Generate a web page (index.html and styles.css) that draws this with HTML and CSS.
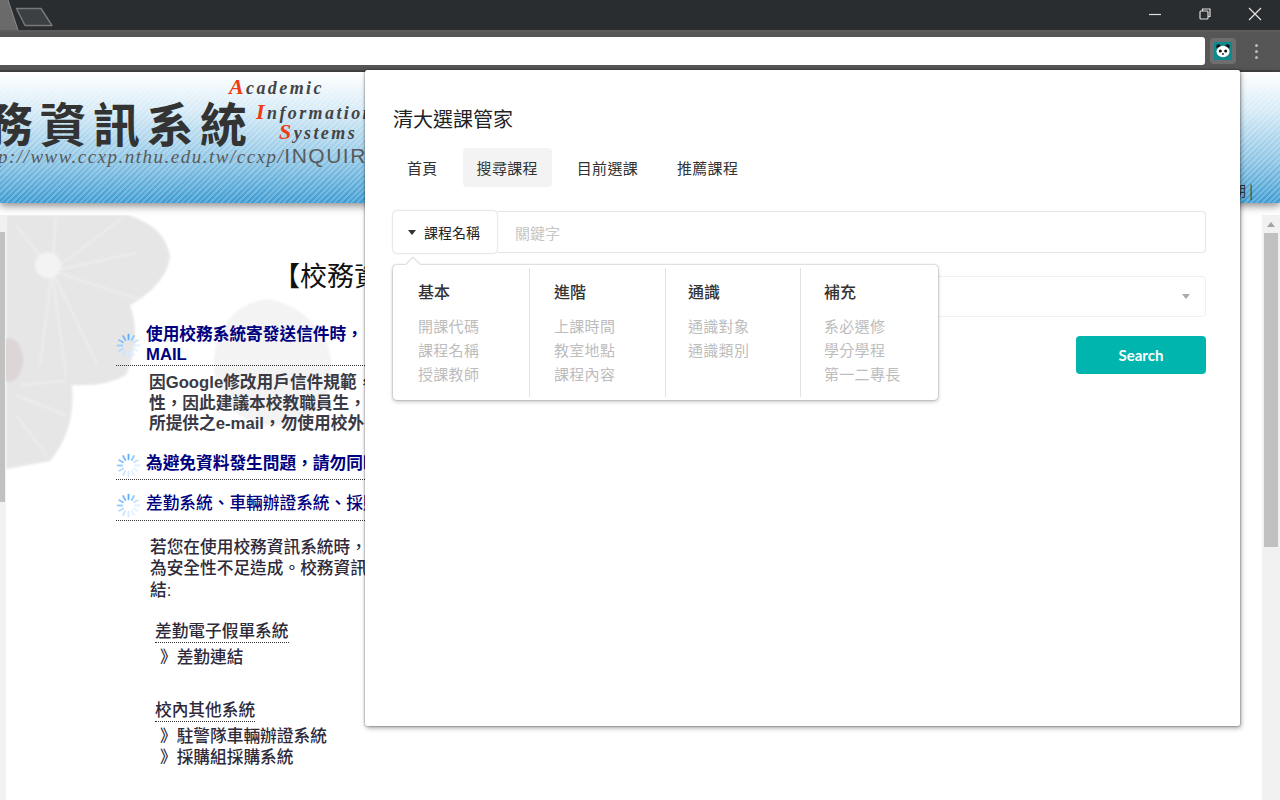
FILE: index.html
```html
<!DOCTYPE html>
<html lang="zh-Hant">
<head>
  <meta charset="UTF-8">
  <title>清大選課管家</title>
  <link rel="stylesheet" href="styles.css">
</head>
<body>
  <svg class="defs" width="0" height="0">
    <symbol id="spin" viewBox="0 0 24 24">
      <g stroke-width="1.7" stroke-linecap="round" fill="none">
        <path d="M12 1.5V6" stroke="#5aaeff"/>
        <path d="M17.2 2.9L15 6.8" stroke="#8cc6ff"/>
        <path d="M21.1 6.8L17.2 9" stroke="#c8e3ff"/>
        <path d="M22.5 12H18" stroke="#e2f0ff"/>
        <path d="M21.1 17.2L17.2 15" stroke="#e8f3ff"/>
        <path d="M17.2 21.1L15 17.2" stroke="#e2f0ff"/>
        <path d="M12 22.5V18" stroke="#d5e9ff"/>
        <path d="M6.8 21.1L9 17.2" stroke="#c8e3ff"/>
        <path d="M2.9 17.2L6.8 15" stroke="#b5d9ff"/>
        <path d="M1.5 12H6" stroke="#9ccfff"/>
        <path d="M2.9 6.8L6.8 9" stroke="#84c2ff"/>
        <path d="M6.8 2.9L9 6.8" stroke="#6db7ff"/>
      </g>
    </symbol>
    <filter id="soft"><feGaussianBlur stdDeviation="0.8"/></filter>
  </svg>

  <header class="tabbar">
    <svg class="tabs-art" width="60" height="31" viewBox="0 0 60 31">
      <path d="M0 0H8L18 30H0Z" fill="#6a6a6a"/>
      <path d="M8 0L18 30" stroke="#8a8a8a" fill="none"/>
      <path d="M16.500 8.500H41L52 25.500H25Z" fill="#3d4043" stroke="#77797b" stroke-width="1.400" stroke-linejoin="round"/>
    </svg>
    <div class="win-controls">
      <svg width="14" height="14" viewBox="0 0 14 14"><path d="M1 7.500H13" stroke="#ddd" stroke-width="1.200"/></svg>
      <svg width="14" height="14" viewBox="0 0 14 14" fill="none" stroke="#ddd" stroke-width="1.200"><rect x="2" y="4" width="8" height="8" rx="1"/><path d="M4.500 4V2H12V9.500H10"/></svg>
      <svg width="14" height="14" viewBox="0 0 14 14"><path d="M1 1L13 13M13 1L1 13" stroke="#e4e4e4" stroke-width="1.200"/></svg>
    </div>
  </header>

  <div class="toolbar">
    <div class="address"></div>
    <div class="ext-btn">
      <svg width="18" height="18" viewBox="0 0 18 18">
        <rect width="18" height="18" fill="#0f8a8c"/>
        <circle cx="4.500" cy="4.500" r="2.200" fill="#111"/>
        <circle cx="13.500" cy="4.500" r="2.200" fill="#111"/>
        <ellipse cx="9" cy="9.500" rx="6.500" ry="5.800" fill="#fff"/>
        <circle cx="6.300" cy="9" r="1.500" fill="#111"/>
        <circle cx="11.700" cy="9" r="1.500" fill="#111"/>
        <circle cx="9" cy="12" r="0.900" fill="#111"/>
      </svg>
    </div>
    <div class="menu-dots"><i></i><i></i><i></i></div>
  </div>

  <section class="banner">
    <div class="banner-title">務資訊系統</div>
    <div class="banner-url">p://www.ccxp.nthu.edu.tw/ccxp/<span>INQUIRE</span></div>
    <div class="banner-en en-a"><b>A</b>cademic</div>
    <div class="banner-en en-i"><b>I</b>nformation</div>
    <div class="banner-en en-s"><b>S</b>ystems</div>
    <div class="banner-end">期 |</div>
  </section>

  <div class="page">
    <div class="left-bar"><div class="left-thumb"></div></div>
    <main class="main">
      <svg class="flower" width="340" height="260" viewBox="0 0 340 260">
        <g filter="url(#soft)">
          <path d="M212 125Q225 88 262 84Q300 90 322 130Q335 175 300 205Q250 222 222 190Q200 160 212 125Z" fill="#f3f3f3"/>
          <path d="M0 0H122Q160 12 164 42Q160 70 124 90Q136 125 120 160Q100 172 66 170Q70 215 44 246L0 254Z" fill="#e6e6e6"/>
          <g stroke="#f6f6f6" stroke-width="1" fill="none">
            <path d="M46 56L115 4M46 56L130 38M46 56L132 84M46 56L92 150M46 56L60 160M46 56L34 150M46 56L50 2M46 56L10 10"/>
            <path d="M10 180L60 200M10 200L40 240M14 170L60 166"/>
          </g>
          <circle cx="42" cy="50" r="13" fill="#f3f3f3"/>
          <ellipse cx="3" cy="145" rx="14" ry="22" fill="#ddd6d6"/>
        </g>
      </svg>
      <div class="content">
        <h1 class="page-title">【校務資訊</h1>

        <h3 class="notice two-line"><svg class="spin"><use href="#spin"/></svg><span>使用校務系統寄發送信件時，<br>MAIL</span></h3>
        <p class="body-text strong">因Google修改用戶信件規範，<br>性，因此建議本校教職員生，<br>所提供之e-mail，勿使用校外</p>

        <h3 class="notice n2"><svg class="spin"><use href="#spin"/></svg><span>為避免資料發生問題，請勿同時</span></h3>
        <h3 class="notice n3"><svg class="spin"><use href="#spin"/></svg><span class="thin">差勤系統、車輛辦證系統、採購</span></h3>

        <p class="body-text para2">若您在使用校務資訊系統時，<br>為安全性不足造成。校務資訊<br>結:</p>

        <div class="sys-group first">
          <div class="sys-title">差勤電子假單系統</div>
          <a class="sys-link">》差勤連結</a>
        </div>
        <div class="sys-group second">
          <div class="sys-title">校內其他系統</div>
          <a class="sys-link">》駐警隊車輛辦證系統</a>
          <a class="sys-link">》採購組採購系統</a>
        </div>
      </div>
    </main>
    <div class="scrollbar">
      <div class="scroll-up"></div>
      <div class="scroll-thumb"></div>
    </div>
  </div>

  <div class="popup">
    <h2 class="popup-title">清大選課管家</h2>
    <nav class="popup-tabs">
      <a class="tab">首頁</a>
      <a class="tab active">搜尋課程</a>
      <a class="tab">目前選課</a>
      <a class="tab">推薦課程</a>
    </nav>

    <div class="search-wrap">
      <div class="search-row">
        <div class="field-btn"><span class="caret"></span>課程名稱</div>
        <div class="keyword">關鍵字</div>
      </div>

      <div class="select-row"><span class="caret light"></span></div>

      <div class="btn-row"><button class="search-btn">Search</button></div>

      <div class="field-menu">
        <div class="menu-col col-a">
          <h4>基本</h4>
          <div>開課代碼</div>
          <div>課程名稱</div>
          <div>授課教師</div>
        </div>
        <div class="menu-col col-b">
          <h4>進階</h4>
          <div>上課時間</div>
          <div>教室地點</div>
          <div>課程內容</div>
        </div>
        <div class="menu-col col-c">
          <h4>通識</h4>
          <div>通識對象</div>
          <div>通識類別</div>
        </div>
        <div class="menu-col col-d">
          <h4>補充</h4>
          <div>系必選修</div>
          <div>學分學程</div>
          <div>第一二專長</div>
        </div>
      </div>
    </div>
  </div>
</body>
</html>
```

FILE: styles.css
```css
* {
  box-sizing: border-box;
}

html, body {
  margin: 0;
  padding: 0;
  height: 800px;
  overflow: hidden;
}

body {
  position: relative;
  background: #fff;
  font-family: "Noto Sans CJK TC", "Liberation Sans", sans-serif;
}

.defs {
  position: absolute;
}

/* browser chrome */
.tabbar {
  display: flex;
  justify-content: space-between;
  height: 32px;
  background: #2a2d30;
  border-bottom: 2px solid #5c5c5c;
}

.tabs-art {
  display: block;
}

.win-controls {
  display: flex;
  align-items: center;
  gap: 36px;
  padding: 0 18px 2px 0;
}

.toolbar {
  display: flex;
  align-items: center;
  height: 40px;
  background: #565656;
  border-bottom: 2px solid #444;
}

.address {
  flex: 1;
  height: 28px;
  background: #fff;
  border-radius: 0 3px 3px 0;
}

.ext-btn {
  display: flex;
  align-items: center;
  justify-content: center;
  width: 26px;
  height: 26px;
  margin-left: 5px;
  background: #6e6e6e;
  border-radius: 4px;
}

.menu-dots {
  display: flex;
  flex-direction: column;
  align-items: center;
  gap: 3px;
  width: 44px;
  padding-right: 4px;
}

.menu-dots i {
  width: 3px;
  height: 3px;
  background: #bbb;
  border-radius: 50%;
}

/* page banner */
.banner {
  position: relative;
  height: 131px;
  overflow: hidden;
  background:
    repeating-linear-gradient(135deg, rgba(255, 255, 255, 0.22) 0 2px, transparent 2px 4px),
    linear-gradient(#fff 0%, #d5eaf6 30%, #8cc4e4 68%, #3c9bd2 100%);
  box-shadow: 0 3px 8px rgba(0, 0, 0, 0.45);
}

.banner-title {
  position: absolute;
  left: -14px;
  top: 20px;
  font-size: 47px;
  line-height: 60px;
  font-weight: 700;
  letter-spacing: 6.500px;
  color: #333;
  white-space: nowrap;
}

.banner-url {
  position: absolute;
  left: -2px;
  top: 70px;
  font-family: "Liberation Serif", serif;
  font-style: italic;
  font-size: 19px;
  line-height: 28px;
  letter-spacing: 1.500px;
  color: #5a5a5a;
  white-space: nowrap;
}

.banner-url span {
  font-family: "Liberation Sans", sans-serif;
  font-style: normal;
  font-size: 21px;
}

.banner-en {
  position: absolute;
  font-family: "Liberation Serif", serif;
  font-style: italic;
  font-size: 18px;
  line-height: 22px;
  font-weight: 700;
  letter-spacing: 2.400px;
  color: #444;
  white-space: nowrap;
}

.banner-en b {
  font-size: 22px;
  color: #f03a10;
}

.en-a { left: 229px; top: 4px; }
.en-i { left: 256px; top: 29px; }
.en-s { left: 279px; top: 49px; }

.banner-end {
  position: absolute;
  right: 27px;
  top: 108px;
  font-size: 14px;
  line-height: 20px;
  color: #333;
}

/* page under the popup */
.page {
  display: flex;
  height: 597px;
  padding-top: 12px;
}

.left-bar {
  width: 6px;
  padding-top: 17px;
  background: #f1f1f1;
}

.left-thumb {
  width: 5px;
  height: 270px;
  background: #c1c1c1;
}

.main {
  position: relative;
  flex: 1;
  overflow: hidden;
}

.flower {
  position: absolute;
  left: 0;
  top: 0;
}

.content {
  position: relative;
  padding-left: 110px;
  width: 359px;
  white-space: nowrap;
  overflow: hidden;
  font-family: "Liberation Sans", "Noto Sans CJK TC", sans-serif;
}

.page-title {
  margin: 0;
  padding: 44px 0 0 157px;
  font-size: 27px;
  line-height: 36px;
  font-weight: 400;
  color: #111;
}

.notice {
  position: relative;
  margin: 0;
  padding-left: 30px;
  font-size: 16.700px;
  font-weight: 700;
  line-height: 20px;
  color: #00007e;
  border-bottom: 1px dotted #333;
}

.notice.two-line {
  margin-top: 30px;
  height: 41px;
}

.notice.n2 {
  margin-top: 19px;
  padding-bottom: 5px;
}

.notice.n3 {
  margin-top: 14px;
  padding-bottom: 6px;
}

.notice .thin {
  font-weight: 500;
}

.spin {
  position: absolute;
  left: 0;
  top: -1px;
  width: 25px;
  height: 25px;
}

.two-line .spin {
  top: 8px;
}

.body-text {
  margin: 7px 0 0;
  padding-left: 33px;
  font-size: 16.700px;
  line-height: 20.500px;
  color: #2e2a3a;
  font-weight: 500;
}

.body-text.strong {
  font-weight: 700;
  color: #3a3a44;
}

.body-text.para2 {
  margin-top: 16px;
  padding-left: 34px;
  line-height: 21.500px;
}

.sys-group {
  padding-left: 39px;
}

.sys-group.first {
  margin-top: 20px;
}

.sys-group.second {
  margin-top: 32px;
}

.sys-title {
  display: table;
  font-size: 16.700px;
  line-height: 21px;
  color: #2e2a3a;
  font-weight: 500;
  border-bottom: 1px dotted #333;
}

.sys-link {
  display: block;
  margin-left: 5px;
  font-size: 16.700px;
  line-height: 21px;
  color: #2e2a3a;
  font-weight: 500;
}

.sys-title + .sys-link {
  margin-top: 4px;
}

.scrollbar {
  width: 18px;
  background: #f1f1f1;
  padding: 0 2px;
}

.scroll-up {
  width: 0;
  height: 0;
  margin: 7px auto 6px;
  border: 4px solid transparent;
  border-top: 0;
  border-bottom: 5px solid #a3a3a3;
}

.scroll-thumb {
  height: 314px;
  background: #c1c1c1;
}

/* extension popup */
.popup {
  position: absolute;
  left: 365px;
  top: 70px;
  width: 875px;
  height: 656px;
  padding: 36px 34px 0 28px;
  background: #fff;
  border-radius: 2px;
  box-shadow: 0 0 2px rgba(0, 0, 0, 0.6), 1px 2px 5px rgba(0, 0, 0, 0.35);
}

.popup-title {
  margin: 0;
  font-size: 20px;
  line-height: 25px;
  font-weight: 400;
  color: #222;
}

.popup-tabs {
  display: flex;
  gap: 11px;
  margin-top: 17px;
}

.tab {
  padding: 0 14px;
  font-size: 15px;
  line-height: 39px;
  letter-spacing: 0.300px;
  color: #333;
  border-radius: 4px;
}

.tab.active {
  background: #f3f3f3;
}

.search-wrap {
  position: relative;
  margin-top: 24px;
}

.search-row {
  display: flex;
  height: 42px;
}

.field-btn {
  display: flex;
  align-items: center;
  width: 104px;
  margin-right: 1px;
  padding-left: 15px;
  font-size: 14px;
  color: #222;
  background: #fff;
  border-radius: 4px;
  box-shadow: 0 0 2px rgba(0, 0, 0, 0.35);
}

.caret {
  width: 0;
  height: 0;
  margin-right: 8px;
  border: 4px solid transparent;
  border-bottom: 0;
  border-top: 5px solid #333;
}

.keyword {
  flex: 1;
  padding-left: 17px;
  font-size: 15px;
  line-height: 41px;
  color: #c6c6c6;
  border: 1px solid #e5e5e5;
  border-left: 0;
  border-radius: 0 4px 4px 0;
}

.select-row {
  display: flex;
  align-items: center;
  justify-content: flex-end;
  height: 41px;
  margin-top: 23px;
  padding-right: 15px;
  border: 1px solid #f0f0f0;
  border-radius: 4px;
}

.caret.light {
  margin-right: 0;
  border-top-color: #aaa;
}

.btn-row {
  display: flex;
  justify-content: flex-end;
  margin-top: 19px;
}

.search-btn {
  width: 130px;
  height: 38px;
  padding: 0;
  font-family: Lato, sans-serif;
  font-size: 15px;
  font-weight: 700;
  color: #fff;
  background: #00b5ad;
  border: none;
  border-radius: 4px;
}

.field-menu {
  position: absolute;
  left: 0;
  top: 54px;
  display: flex;
  width: 545px;
  height: 135px;
  padding: 3px 0;
  background: #fff;
  border-radius: 4px;
  box-shadow: 0 0 2px rgba(0, 0, 0, 0.4), 0 2px 4px rgba(0, 0, 0, 0.2);
}

.field-menu::before {
  content: "";
  position: absolute;
  left: 15px;
  top: -5px;
  width: 10px;
  height: 10px;
  background: #fff;
  transform: rotate(45deg);
  box-shadow: -1px -1px 1px rgba(0, 0, 0, 0.15);
}

.menu-col {
  position: relative;
  padding: 11px 0 0 25px;
  font-size: 15px;
  line-height: 24px;
  letter-spacing: 0.300px;
  color: #bdbdbd;
  border-right: 1px solid #e2e2e2;
}

.menu-col.col-a { width: 137px; }
.menu-col.col-b { width: 136px; padding-left: 24px; }
.menu-col.col-c { width: 135px; padding-left: 22px; }
.menu-col.col-d { flex: 1; padding-left: 23px; border-right: 0; }

.menu-col h4 {
  margin: 0 0 11px;
  font-size: 16px;
  line-height: 24px;
  font-weight: 500;
  letter-spacing: 0;
  color: #333;
}
```
